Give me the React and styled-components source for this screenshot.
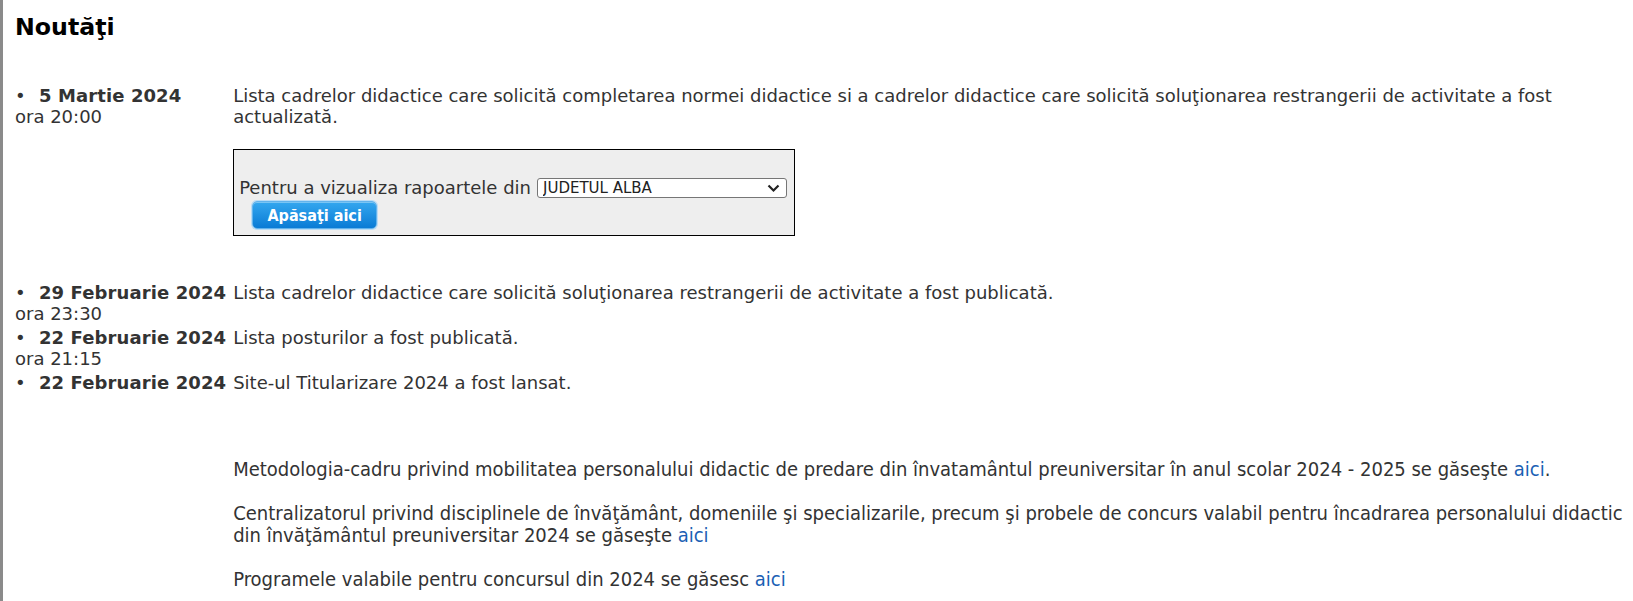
import React from 'react'
import styled, { createGlobalStyle } from 'styled-components'

const GlobalStyle = createGlobalStyle`
  html, body {
    margin: 0;
    background: #fff;
  }
  body {
    font-family: 'DejaVu Sans', Verdana, sans-serif;
    color: #333;
  }
`

const Page = styled.div`
  min-height: 601px;
  box-sizing: border-box;
  border-left: 3px solid #8a8a8a;
  padding: 0 2px 0 12px;
`

const Title = styled.h2`
  margin: 0;
  padding-top: 13px;
  font-size: 23.7px;
  line-height: 28px;
  font-weight: bold;
  color: #000;
`

const NewsList = styled.div`
  display: grid;
  grid-template-columns: max-content 1fr;
  column-gap: 7px;
  row-gap: 3px;
  margin-top: 44px;
  font-size: 18px;
  line-height: 21px;
`

const DateCell = styled.div`
  white-space: nowrap;
`

const Bullet = styled.span`
  display: inline-block;
  width: 24px;
`

const DateText = styled.b`
  font-weight: bold;
  letter-spacing: 0.1px;
`

const TextCell = styled.div``

const ReportBox = styled.form`
  width: fit-content;
  margin: 22px 0 43px;
  padding: 28px 7px 6px 5px;
  background: #eeeeee;
  border: 1px solid #000;
`

const SelectRow = styled.div`
  display: flex;
  align-items: center;
  gap: 6px;
  line-height: 20px;
`

const SelectWrap = styled.label`
  position: relative;
  display: inline-block;
`

const CountySelect = styled.select`
  appearance: none;
  display: block;
  width: 250px;
  height: 20px;
  padding: 0 22px 0 5px;
  border: 1px solid #767676;
  border-radius: 3px;
  background: #fff;
  color: #222;
  font: 15px 'DejaVu Sans', sans-serif;
`

const Chevron = styled.svg`
  position: absolute;
  right: 7px;
  top: 5px;
  pointer-events: none;
`

const SubmitButton = styled.button`
  display: block;
  margin: 3px 0 0 13px;
  width: 125px;
  height: 28px;
  padding: 0;
  border: 1px solid #63b3ec;
  border-radius: 5px;
  background: linear-gradient(#34a7ef, #0a7bd5);
  box-shadow: 0 0 0 1px #b9dcf6, inset 0 1px 0 rgba(255, 255, 255, 0.35);
  color: #fff;
  font: bold 16px 'DejaVu Sans Condensed', 'DejaVu Sans', sans-serif;
  font-stretch: condensed;
  cursor: pointer;
`

const Notes = styled.div`
  grid-column: 2;
  margin-top: 62px;
  font-family: 'DejaVu Sans Condensed', 'DejaVu Sans', sans-serif;
  font-stretch: condensed;
  font-size: 20px;
`

const Note = styled.p`
  margin: 0 0 22px;
  line-height: 22px;
`

const Link = styled.a`
  color: #1a5fb4;
  text-decoration: none;
`

const news = [
  {
    date: '29 Februarie 2024',
    time: 'ora 23:30',
    text: 'Lista cadrelor didactice care solicită soluţionarea restrangerii de activitate a fost publicată.',
  },
  {
    date: '22 Februarie 2024',
    time: 'ora 21:15',
    text: 'Lista posturilor a fost publicată.',
  },
  {
    date: '22 Februarie 2024',
    text: 'Site-ul Titularizare 2024 a fost lansat.',
  },
]

const NewsDate = ({ date, time }) => (
  <DateCell>
    <Bullet>•</Bullet>
    <DateText>{date}</DateText>
    {time && (
      <>
        <br />
        {time}
      </>
    )}
  </DateCell>
)

const App = () => (
  <Page>
    <GlobalStyle />
    <Title>Noutăţi</Title>
    <NewsList>
      <NewsDate date="5 Martie 2024" time="ora 20:00" />
      <TextCell>
        Lista cadrelor didactice care solicită completarea normei didactice si a
        cadrelor didactice care solicită soluţionarea restrangerii de activitate a
        fost actualizată.
        <ReportBox onSubmit={e => e.preventDefault()}>
          <SelectRow>
            Pentru a vizualiza rapoartele din
            <SelectWrap>
              <CountySelect defaultValue="AB">
                <option value="AB">JUDETUL ALBA</option>
                <option value="AR">JUDETUL ARAD</option>
                <option value="AG">JUDETUL ARGES</option>
              </CountySelect>
              <Chevron width="13" height="10" viewBox="0 0 13 10">
                <path d="M1.5 2.5 L6.5 7.5 L11.5 2.5" fill="none" stroke="#222" strokeWidth="2.2" />
              </Chevron>
            </SelectWrap>
          </SelectRow>
          <SubmitButton type="submit">Apăsaţi aici</SubmitButton>
        </ReportBox>
      </TextCell>

      {news.map((item, i) => (
        <React.Fragment key={i}>
          <NewsDate date={item.date} time={item.time} />
          <TextCell>{item.text}</TextCell>
        </React.Fragment>
      ))}

      <Notes>
        <Note>
          Metodologia-cadru privind mobilitatea personalului didactic de predare din
          învatamântul preuniversitar în anul scolar 2024 - 2025 se găseşte{' '}
          <Link href="#">aici</Link>.
        </Note>
        <Note>
          Centralizatorul privind disciplinele de învăţământ, domeniile şi
          specializarile, precum şi probele de concurs valabil pentru încadrarea
          personalului didactic din învăţământul preuniversitar 2024 se găseşte{' '}
          <Link href="#">aici</Link>
        </Note>
        <Note>
          Programele valabile pentru concursul din 2024 se găsesc{' '}
          <Link href="#">aici</Link>
        </Note>
      </Notes>
    </NewsList>
  </Page>
)

export default App
